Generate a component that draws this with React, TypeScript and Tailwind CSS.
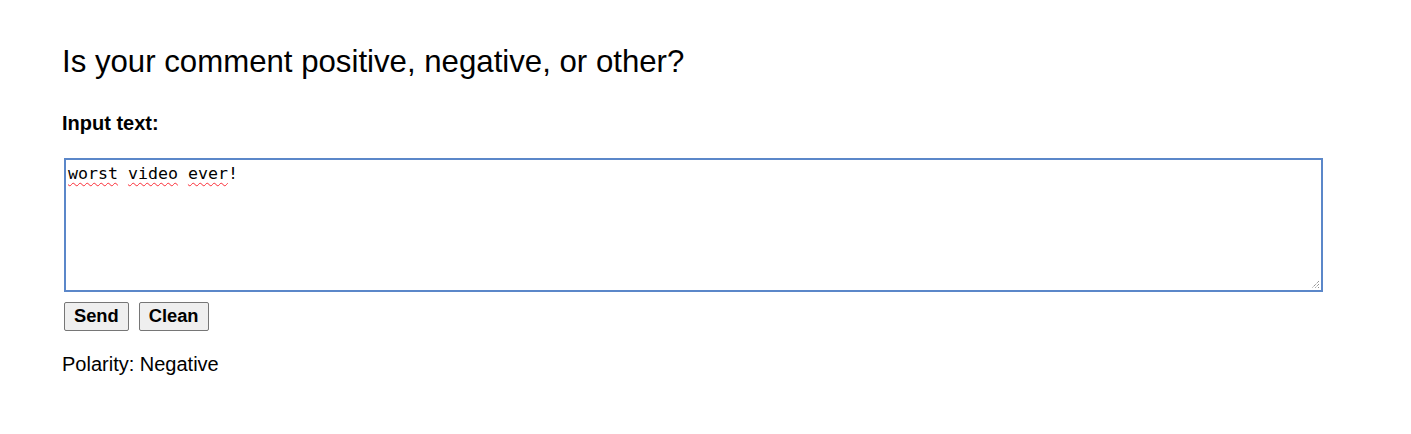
export default function App() {
  return (
    <div className="min-h-screen bg-white px-[62px] pt-[40px] text-black" style={{ fontFamily: '"Liberation Sans", Arial, sans-serif' }}>
      <h2 className="text-[31.2px] leading-[44px]">Is your comment positive, negative, or other?</h2>
      <p className="mt-[27px] text-[20px] font-bold leading-[24px]">Input text:</p>

      <div className="relative mt-[23px] ml-[2px] h-[134px] w-[1259px] border-2 border-[#5b87c9] bg-white px-[2px] pt-[4px]">
        <div className="text-[16.6px] leading-[20px]" style={{ fontFamily: '"DejaVu Sans Mono", monospace' }}>
          <span className="underline decoration-wavy decoration-red-500 decoration-1 underline-offset-[3px]">worst</span>{" "}
          <span className="underline decoration-wavy decoration-red-500 decoration-1 underline-offset-[3px]">video</span>{" "}
          <span className="underline decoration-wavy decoration-red-500 decoration-1 underline-offset-[3px]">ever</span>!
        </div>
        <svg className="absolute bottom-[1px] right-[1px]" width="9" height="9" viewBox="0 0 9 9">
          <path d="M8 1 L1 8 M8 4 L4 8 M8 7 L7 8" stroke="#666" strokeWidth="1" strokeDasharray="1 1" />
        </svg>
      </div>

      <div className="mt-[10px] ml-[2px] flex gap-[10px]">
        <button className="h-[29px] rounded-[2px] border border-[#767676] bg-[#efefef] px-[9px] text-[18.3px] font-bold leading-none">Send</button>
        <button className="h-[29px] rounded-[2px] border border-[#767676] bg-[#efefef] px-[9px] text-[18.3px] font-bold leading-none">Clean</button>
      </div>

      <p className="mt-[21px] text-[20px] leading-[24px]">Polarity: Negative</p>
    </div>
  );
}
